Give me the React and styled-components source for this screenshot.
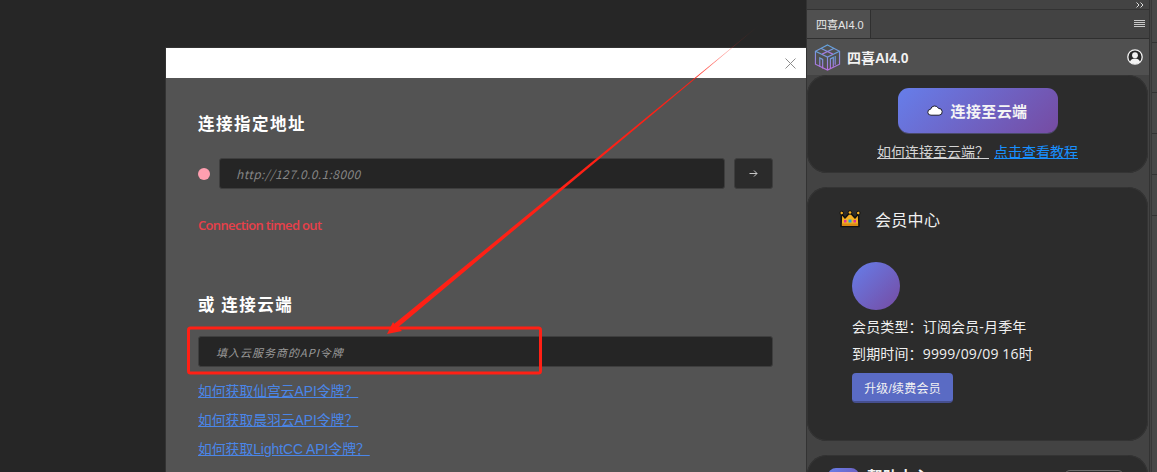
import styled, { createGlobalStyle } from 'styled-components';
import { useState } from 'react';

const GlobalStyle = createGlobalStyle`
  html, body {
    margin: 0;
    padding: 0;
    width: 1157px;
    height: 472px;
    overflow: hidden;
    background: #262626;
    font-family: "Noto Sans CJK SC", "Noto Sans", sans-serif;
  }
  * { box-sizing: border-box; }
`

const Page = styled.div`
  position: relative;
  display: flex;
  width: 1157px;
  height: 472px;
  overflow: hidden;
`

const Canvas = styled.div`
  flex: 0 0 806px;
  padding: 48px 0 0 166px;
  background: #262626;
`

const Dialog = styled.div`
  width: 640px;
  height: 424px;
  background: #535353;
  box-shadow: 0 0 0 1px #333;
`

const DialogHead = styled.div`
  display: flex;
  justify-content: flex-end;
  align-items: center;
  height: 30px;
  padding-right: 10px;
  background: #fff;
`

const DialogBody = styled.div`
  padding: 33px 33px 0 32px;
`

const SectionTitle = styled.div`
  font-size: 16.5px;
  line-height: 24px;
  font-weight: 700;
  color: #fff;
  letter-spacing: 1.5px;
`

const AddressRow = styled.div`
  display: flex;
  align-items: center;
  margin-top: 23px;
`

const StatusDot = styled.span`
  flex: 0 0 12px;
  height: 12px;
  margin-right: 9px;
  border-radius: 50%;
  background: #ff9fb0;
`

const Field = styled.input`
  flex: 1;
  min-width: 0;
  height: 31px;
  padding: 0 ${props => props.$small ? '17px' : '16px'};
  border: 1px solid #3e3e3e;
  border-radius: 3px;
  outline: 0;
  background: #252525;
  color: #ddd;
  font-family: "Noto Sans CJK SC", sans-serif;
  font-style: italic;
  font-size: ${props => props.$small ? '11px' : '12px'};

  &::placeholder {
    color: ${props => props.$small ? '#9a9a9a' : '#848484'};
    opacity: 1;
    letter-spacing: ${props => props.$small ? '1px' : '0.4px'};
  }
`

const ArrowButton = styled.button`
  display: flex;
  align-items: center;
  justify-content: center;
  flex: 0 0 39px;
  height: 31px;
  margin-left: 9px;
  padding: 0;
  border: 1px solid #3e3e3e;
  border-radius: 3px;
  background: #2b2b2b;
  color: #c8c8c8;
`

const ErrorText = styled.div`
  margin-top: 27px;
  font-family: "Open Sans", sans-serif;
  font-size: 13px;
  font-weight: 600;
  line-height: 18px;
  letter-spacing: -0.65px;
  color: #e8404a;
`

const CloudTitle = styled(SectionTitle)`
  margin-top: 58px;
`

const CloudRow = styled.div`
  display: flex;
  margin-top: 20px;
`

const HelpLinks = styled.div`
  display: flex;
  flex-direction: column;
  gap: 10px;
  margin-top: 15px;
`

const HelpLink = styled.a`
  font-family: "Liberation Sans", "Noto Sans CJK SC", sans-serif;
  font-size: 13.8px;
  line-height: 19px;
  color: #4a86e8;
  text-decoration: underline;
  cursor: pointer;
`

const Panel = styled.div`
  flex: 1;
  display: flex;
  background: #434343;
  min-width: 0;
`

const PanelMain = styled.div`
  flex: 0 0 344px;
  display: flex;
  flex-direction: column;
  border-left: 1px solid #333;
  border-right: 1px solid #333;
  overflow: hidden;
`

const TopStrip = styled.div`
  display: flex;
  justify-content: flex-end;
  align-items: center;
  flex: 0 0 10px;
  padding-right: 5px;
  background: #434343;
  border-bottom: 1px solid #333;
`

const TabBar = styled.div`
  display: flex;
  justify-content: space-between;
  align-items: center;
  flex: 0 0 29px;
  padding-right: 4px;
  background: #434343;
  border-bottom: 1px solid #2f2f2f;
`

const Tab = styled.div`
  display: flex;
  align-items: center;
  height: 28px;
  padding: 0 6px 0 9px;
  background: #505050;
  border-right: 1px solid #2f2f2f;
  font-family: "Liberation Sans", "Noto Sans CJK SC", sans-serif;
  font-size: 11px;
  color: #e6e6e6;
`

const BrandBar = styled.div`
  display: flex;
  align-items: center;
  flex: 0 0 36px;
  padding: 0 6px 0 7px;
  background: #505050;
`

const BrandName = styled.div`
  flex: 1;
  margin-left: 6px;
  font-family: "Liberation Sans", "Noto Sans CJK SC", sans-serif;
  font-size: 14px;
  font-weight: 700;
  color: #f2f2f2;
`

const Cards = styled.div`
  display: flex;
  flex-direction: column;
  gap: 14px;
  padding: 0 1px 0 0;
`

const Card = styled.section`
  height: ${props => props.$height}px;
  flex: 0 0 auto;
  padding: ${props => props.$pad};
  border-radius: 20px;
  background: #2c2c2c;
  box-shadow: inset 0 0 0 1px #343434;
`

const ConnectButton = styled.button`
  display: flex;
  align-items: center;
  justify-content: center;
  gap: 7px;
  width: 160px;
  height: 45px;
  margin: 0 auto;
  border: 0;
  border-radius: 11px;
  background: linear-gradient(135deg, #667eea, #764ba2);
  box-shadow: 0 1px 0 #4a4a6a;
  font-family: "Noto Sans CJK SC", sans-serif;
  font-size: 15px;
  font-weight: 700;
  letter-spacing: 0.4px;
  color: #f5f5f5;
`

const ConnectHint = styled.div`
  display: flex;
  justify-content: center;
  gap: 5px;
  margin-top: 8px;
  font-size: 14px;
  line-height: 20px;
`

const HintLink = styled.a`
  color: ${props => props.$accent ? '#1890ff' : '#d4d4d4'};
  text-decoration: underline;
  white-space: pre;
`

const MemberHead = styled.div`
  display: flex;
  align-items: center;
  gap: 14px;
  margin-left: 32px;
  font-size: 16px;
  letter-spacing: 0.3px;
  line-height: 22px;
  color: #f0f0f0;
`

const MemberBody = styled.div`
  display: flex;
  flex-direction: column;
  align-items: flex-start;
  margin: 32px 0 0 45px;
`

const Avatar = styled.div`
  width: 48px;
  height: 48px;
  border-radius: 50%;
  background: linear-gradient(135deg, #667eea, #764ba2);
`

const MemberLine = styled.div`
  margin-top: 7px;
  font-family: "Open Sans", "Noto Sans CJK SC", sans-serif;
  font-size: 14px;
  line-height: 20px;
  letter-spacing: 0.15px;
  color: #f0f0f0;
`

const UpgradeButton = styled.button`
  height: 30px;
  width: 101px;
  margin-top: 9px;
  padding: 0;
  border: 0;
  border-bottom: 2px solid #464f8f;
  border-radius: 4px;
  background: #5a6bc4;
  font-family: "Liberation Sans", "Noto Sans CJK SC", sans-serif;
  font-size: 12px;
  letter-spacing: 0.2px;
  color: #f2f2f2;
`

const HelpHead = styled.div`
  display: flex;
  align-items: flex-start;
  margin-left: 21px;
  padding-top: 13px;
`

const HelpBadge = styled.div`
  width: 31px;
  height: 31px;
  border-radius: 8px;
  background: linear-gradient(135deg, #667eea, #764ba2);
`

const HelpTitle = styled.div`
  flex: 1;
  margin: -4px 0 0 8px;
  font-size: 15.5px;
  font-weight: 700;
  line-height: 24px;
  color: #f2f2f2;
`

const HelpPill = styled.div`
  width: 60px;
  height: 24px;
  margin: 2px 24px 0 0;
  border: 1px solid #6a6a6a;
  border-radius: 6px;
`

const SideRail = styled.div`
  flex: 1;
  display: flex;
  flex-direction: column;
  margin-left: 1px;
  padding-top: 10px;
  background: #484848;
  border-left: 1px solid #383838;
`

const RailCell = styled.div`
  height: ${props => props.$height}px;
  border-bottom: 1px solid #333;
`

const Scrawl = styled.svg`
  position: absolute;
  top: 0;
  left: 0;
  pointer-events: none;
`

const ChevronsIcon = () => (
  <svg width="8" height="6" viewBox="0 0 8 6" fill="none">
    <path d="M.5.5 3 3 .5 5.500M4.500.5 7 3 4.500 5.500" stroke="#dcdcdc" strokeWidth="1" />
  </svg>
)

const CloudIcon = () => (
  <svg width="16" height="11" viewBox="0 0 16 11">
    <path d="M4 10.200a3 3 0 0 1-.4-6A4.200 4.200 0 0 1 11.500 3.400a3.400 3.400 0 0 1 .6 6.800z" fill="#fff" stroke="#1c1c2c" strokeWidth="1" />
  </svg>
)

const CubeLogo = () => (
  <svg width="27" height="29" viewBox="0 0 28 29" fill="none">
    <defs>
      <linearGradient id="cubeStroke" x1="0" y1="0" x2="0" y2="1">
        <stop offset="0" stopColor="#63a4dc" />
        <stop offset="1" stopColor="#b86fe0" />
      </linearGradient>
    </defs>
    <g stroke="url(#cubeStroke)" strokeWidth="1.200">
      <path d="M14 1.500 26.500 8v13.500L14 27.500 1.500 21.500V8z" />
      <path d="M1.500 8 14 14l12.500-6M14 14v13.500" />
      <path d="M7 5 19.500 11M21 5 8.500 11" />
      <path d="M6 24v-9l3 1.500v9.500M17 26v-10l3-1.500V24M22 22v-9" />
    </g>
  </svg>
)

const CrownIcon = () => (
  <svg width="22" height="18" viewBox="0 0 22 18">
    <path
      d="M2.500 3.500 6 8 11 2.500 16 8 19.500 3.500 20 16.500H2z"
      fill="#f5b024"
      stroke="#111"
      strokeWidth="1.500"
      strokeLinejoin="round"
    />
    <circle cx="2.700" cy="3" r="1.800" fill="#f5b024" stroke="#111" strokeWidth="1" />
    <circle cx="11" cy="2.500" r="1.800" fill="#f5b024" stroke="#111" strokeWidth="1" />
    <circle cx="19.300" cy="3" r="1.800" fill="#f5b024" stroke="#111" strokeWidth="1" />
    <rect x="3" y="13.500" width="16" height="2.500" fill="#d98a14" />
    <rect x="5" y="10" width="2.500" height="2.500" fill="#e0309a" />
    <rect x="9.500" y="9.500" width="3" height="3" fill="#18a8d8" />
    <rect x="14.500" y="10" width="2.500" height="2.500" fill="#e0309a" />
  </svg>
)

const UserIcon = () => (
  <svg width="16" height="16" viewBox="0 0 16 16">
    <circle cx="8" cy="8" r="7.200" fill="#2a2a2a" stroke="#f2f2f2" strokeWidth="1.300" />
    <circle cx="8" cy="6.200" r="2.900" fill="#f2f2f2" />
    <path d="M2.800 13c.8-2.600 2.800-3.600 5.200-3.600s4.400 1 5.200 3.600A7 7 0 0 1 8 15a7 7 0 0 1-5.200-2z" fill="#f2f2f2" />
  </svg>
)

const MenuIcon = () => (
  <svg width="11" height="8" viewBox="0 0 11 8">
    <path d="M0 .5h11M0 2.500h11M0 4.500h11M0 6.500h11" stroke="#c8c8c8" strokeWidth="1" />
  </svg>
)

const CloseIcon = () => (
  <svg width="11" height="11" viewBox="0 0 11 11">
    <path d="M.5.5l10 10M10.500.5l-10 10" stroke="#8c8c8c" strokeWidth="1" />
  </svg>
)

const ArrowIcon = () => (
  <svg width="9" height="9" viewBox="0 0 9 9" fill="none">
    <path d="M.5 4.500h7.500M5 1.500l3 3-3 3" stroke="currentColor" strokeWidth="1" />
  </svg>
)

const App = () => {
  const [address, setAddress] = useState('');
  const [token, setToken] = useState('');

  return (
    <Page>
      <GlobalStyle />
      <Canvas>
        <Dialog>
          <DialogHead><CloseIcon /></DialogHead>
          <DialogBody>
            <SectionTitle>连接指定地址</SectionTitle>
            <AddressRow>
              <StatusDot />
              <Field
                value={address}
                onChange={(e) => setAddress(e.target.value)}
                placeholder="http://127.0.0.1:8000"
              />
              <ArrowButton><ArrowIcon /></ArrowButton>
            </AddressRow>
            <ErrorText>Connection timed out</ErrorText>
            <CloudTitle>或 连接云端</CloudTitle>
            <CloudRow>
              <Field
                $small
                value={token}
                onChange={(e) => setToken(e.target.value)}
                placeholder="填入云服务商的API令牌"
              />
            </CloudRow>
            <HelpLinks>
              <HelpLink>如何获取仙宫云API令牌？</HelpLink>
              <HelpLink>如何获取晨羽云API令牌？</HelpLink>
              <HelpLink>如何获取LightCC API令牌？</HelpLink>
            </HelpLinks>
          </DialogBody>
        </Dialog>
      </Canvas>

      <Panel>
        <PanelMain>
          <TopStrip><ChevronsIcon /></TopStrip>
          <TabBar>
            <Tab>四喜AI4.0</Tab>
            <MenuIcon />
          </TabBar>
          <BrandBar>
            <CubeLogo />
            <BrandName>四喜AI4.0</BrandName>
            <UserIcon />
          </BrandBar>
          <Cards>
            <Card $height={98} $pad="13px 0 0">
              <ConnectButton><CloudIcon />连接至云端</ConnectButton>
              <ConnectHint>
                <HintLink>如何连接至云端？</HintLink>
                <HintLink $accent>点击查看教程</HintLink>
              </ConnectHint>
            </Card>
            <Card $height={254} $pad="21px 0 0">
              <MemberHead><CrownIcon />会员中心</MemberHead>
              <MemberBody>
                <Avatar />
                <MemberLine>会员类型：订阅会员-月季年</MemberLine>
                <MemberLine>到期时间：9999/09/09 16时</MemberLine>
                <UpgradeButton>升级/续费会员</UpgradeButton>
              </MemberBody>
            </Card>
            <Card $height={80} $pad="0">
              <HelpHead>
                <HelpBadge />
                <HelpTitle>帮助中心</HelpTitle>
                <HelpPill />
              </HelpHead>
            </Card>
          </Cards>
        </PanelMain>
        <SideRail>
          <RailCell $height={33} />
          <RailCell $height={50} />
          <RailCell $height={41} />
          <RailCell $height={41} />
          <RailCell $height={41} />
        </SideRail>
      </Panel>

      <Scrawl width="1157" height="472" viewBox="0 0 1157 472">
        <defs>
          <linearGradient id="arrowFade" gradientUnits="userSpaceOnUse" x1="760" y1="24" x2="690" y2="82">
            <stop offset="0" stopColor="#ff2015" stopOpacity="0.05" />
            <stop offset="1" stopColor="#ff2015" />
          </linearGradient>
        </defs>
        <polygon points="760,24.500 393.600,330.900 390.400,327.100" fill="url(#arrowFade)" />
        <polygon points="387,334 393,322 396,326 399,328 402,331" fill="#ff2015" />
        <rect x="188.500" y="328" width="352" height="45" rx="2" fill="none" stroke="#ff2015" strokeWidth="3" />
      </Scrawl>
    </Page>
  );
}

export default App;
